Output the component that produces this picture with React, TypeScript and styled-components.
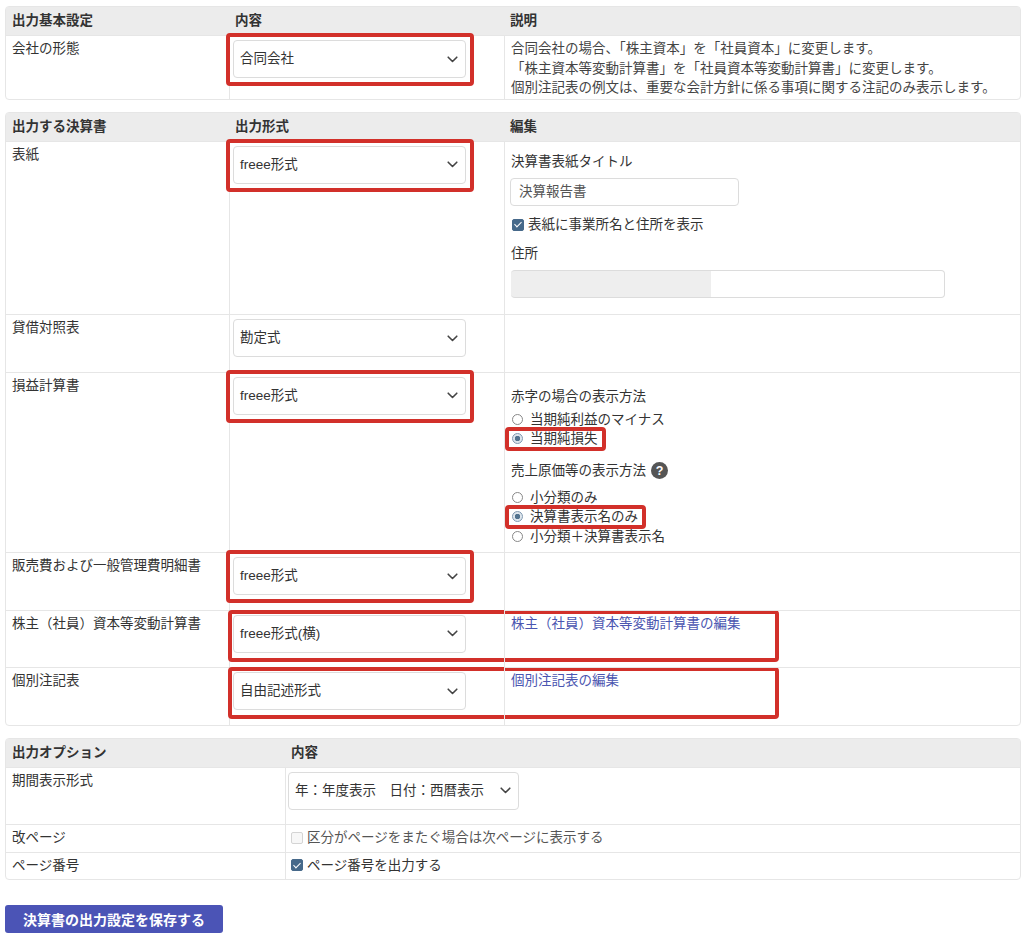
import {createGlobalStyle, styled} from "styled-components";

const GlobalStyle = createGlobalStyle`
    body {
        margin: 0;
        background: #fff;
        font-family: "Liberation Sans", "Noto Sans CJK JP", sans-serif;
        font-size: 13.5px;
        line-height: 19.5px;
        color: #333;
    }
`

const Page = styled.div`
    padding: 6px 5px 10px;
`

const SettingsTable = styled.table`
    width: 1014px;
    table-layout: fixed;
    border-collapse: separate;
    border-spacing: 0;
    border: 1px solid #e6e6e6;
    border-radius: 4px;
    margin-bottom: 12px;
`

const Col = styled.col<{ $w: number }>`
    width: ${p => p.$w}px;
`

const HeadCell = styled.th`
    background: #ececec;
    text-align: left;
    font-weight: bold;
    color: #333;
    padding: 4px 6px 4px;
    height: 20px;
`

const Cell = styled.td<{ $pad?: string }>`
    position: relative;
    vertical-align: top;
    border-top: 1px solid #e6e6e6;
    padding: ${p => p.$pad ?? '3px 6px 4px'};

    & + & {
        border-left: 1px solid #e6e6e6;
    }
`

const Description = styled.div`
    color: #444;
    margin-bottom: -3px;
`

const SelectBox = styled.div<{ $w?: number }>`
    display: flex;
    align-items: center;
    justify-content: space-between;
    box-sizing: border-box;
    width: ${p => p.$w ?? 233}px;
    height: 38px;
    padding: 0 7px 0 6px;
    border: 1px solid #dcdcdc;
    border-radius: 4px;
    background: #fff;
    color: #333;
`

const Marked = styled.div`
    position: relative;
    width: fit-content;
`

const RedFrame = styled.span<{ $inset?: string }>`
    position: absolute;
    inset: ${p => p.$inset ?? '-7px -8px -8px -7px'};
    border: 4px solid #d2302a;
    border-radius: 4px;
    pointer-events: none;
`

const WideFrame = styled.span`
    position: absolute;
    top: -1px;
    left: -2px;
    width: 551px;
    height: 52px;
    box-sizing: border-box;
    border: 4px solid #d2302a;
    border-radius: 4px;
    pointer-events: none;
`

const Stack = styled.div<{ $top: number; $bottom: number }>`
    display: flex;
    flex-direction: column;
    align-items: flex-start;
    padding: ${p => p.$top}px 0 ${p => p.$bottom}px;
`

const Gap = styled.div<{ $h: number }>`
    height: ${p => p.$h}px;
    flex: none;
`

const TextInput = styled.div`
    box-sizing: border-box;
    width: 229px;
    height: 28px;
    margin-left: -1px;
    padding: 0 8px;
    display: flex;
    align-items: center;
    border: 1px solid #dcdcdc;
    border-radius: 4px;
    color: #555;
`

const AddressInput = styled.div`
    box-sizing: border-box;
    width: 434px;
    height: 28px;
    border: 1px solid #dcdcdc;
    border-left: none;
    border-radius: 4px;
    background: linear-gradient(to right, #eeeeee 0 200px, #fff 200px);
`

const CheckLine = styled.label<{ $muted?: boolean }>`
    display: flex;
    align-items: center;
    gap: 4px;
    color: ${p => p.$muted ? '#555' : '#333'};
`

const CheckBox = styled.span<{ $on?: boolean }>`
    position: relative;
    flex: none;
    box-sizing: border-box;
    width: 12px;
    height: 12px;
    margin-left: 1px;
    border-radius: 2px;
    border: 1px solid ${p => p.$on ? '#46698a' : '#d4d4d4'};
    background: ${p => p.$on ? '#46698a' : '#f7f7f7'};

    &::after {
        content: '';
        display: ${p => p.$on ? 'block' : 'none'};
        position: absolute;
        left: 3px;
        top: 0.5px;
        width: 3px;
        height: 6px;
        border: solid #fff;
        border-width: 0 1.6px 1.6px 0;
        transform: rotate(45deg);
    }
`

const RadioLine = styled.label`
    display: flex;
    align-items: center;
    gap: 7px;
    color: #333;
`

const RadioDot = styled.span<{ $on?: boolean }>`
    flex: none;
    box-sizing: border-box;
    width: 11px;
    height: 11px;
    margin-left: 1px;
    border-radius: 50%;
    border: 1px solid ${p => p.$on ? '#7f98b0' : '#888'};
    background: ${p => p.$on ? 'radial-gradient(circle, #52738f 0 2.5px, #dde5ec 3px)' : '#fff'};
`

const Heading = styled.div`
    display: flex;
    align-items: center;
    gap: 5px;
    color: #333;
`

const HelpIcon = styled.span`
    display: inline-flex;
    align-items: center;
    justify-content: center;
    width: 17px;
    height: 17px;
    border-radius: 50%;
    background: #555;
    color: #fff;
    font-size: 12.5px;
    font-weight: bold;
    line-height: 1;
`

const EditLink = styled.a`
    color: #4a55b0;
    text-decoration: none;
`

const SaveButton = styled.button`
    display: block;
    margin-top: 25px;
    width: 218px;
    height: 28px;
    border: none;
    border-radius: 3px;
    background: #4b54b6;
    color: #fff;
    font-family: "Liberation Sans", "Noto Sans CJK JP", sans-serif;
    font-size: 14px;
    font-weight: bold;
    cursor: pointer;
`

function Chevron() {
    return (
        <svg width="11" height="7" viewBox="0 0 11 7">
            <path d="M1.2 1.2 L5.5 5.5 L9.8 1.2" fill="none" stroke="#444" strokeWidth="1.6" strokeLinecap="round" strokeLinejoin="round"/>
        </svg>
    )
}

function Select({value, width, marked}: { value: string; width?: number; marked?: boolean }) {
    const box = (
        <SelectBox $w={width}>
            <span>{value}</span>
            <Chevron/>
        </SelectBox>
    )
    if (!marked) return box
    return (
        <Marked>
            {box}
            <RedFrame/>
        </Marked>
    )
}

function Radio({label, on, marked}: { label: string; on?: boolean; marked?: boolean }) {
    return (
        <Marked>
            <RadioLine>
                <RadioDot $on={on}/>
                {label}
            </RadioLine>
            {marked && <RedFrame $inset={'-2px -8px -2px -6px'}/>}
        </Marked>
    )
}

const SELECT_PAD = '4px 3px 14.5px'

export default function App() {
    return (
        <Page>
            <GlobalStyle/>

            <SettingsTable>
                <colgroup>
                    <Col $w={223}/>
                    <Col $w={275}/>
                    <Col $w={516}/>
                </colgroup>
                <thead>
                <tr>
                    <HeadCell>出力基本設定</HeadCell>
                    <HeadCell>内容</HeadCell>
                    <HeadCell>説明</HeadCell>
                </tr>
                </thead>
                <tbody>
                <tr>
                    <Cell>会社の形態</Cell>
                    <Cell $pad={'4px 3px 0'}><Select value={'合同会社'} marked/></Cell>
                    <Cell>
                        <Description>
                            合同会社の場合、「株主資本」を「社員資本」に変更します。<br/>
                            「株主資本等変動計算書」を「社員資本等変動計算書」に変更します。<br/>
                            個別注記表の例文は、重要な会計方針に係る事項に関する注記のみ表示します。
                        </Description>
                    </Cell>
                </tr>
                </tbody>
            </SettingsTable>

            <SettingsTable>
                <colgroup>
                    <Col $w={223}/>
                    <Col $w={275}/>
                    <Col $w={516}/>
                </colgroup>
                <thead>
                <tr>
                    <HeadCell>出力する決算書</HeadCell>
                    <HeadCell>出力形式</HeadCell>
                    <HeadCell>編集</HeadCell>
                </tr>
                </thead>
                <tbody>
                <tr>
                    <Cell>表紙</Cell>
                    <Cell $pad={SELECT_PAD}><Select value={'freee形式'} marked/></Cell>
                    <Cell $pad={'0 6px'}>
                        <Stack $top={10} $bottom={16}>
                            <div>決算書表紙タイトル</div>
                            <Gap $h={7}/>
                            <TextInput>決算報告書</TextInput>
                            <Gap $h={9}/>
                            <CheckLine><CheckBox $on/>表紙に事業所名と住所を表示</CheckLine>
                            <Gap $h={9.5}/>
                            <div>住所</div>
                            <Gap $h={6.5}/>
                            <AddressInput/>
                        </Stack>
                    </Cell>
                </tr>
                <tr>
                    <Cell>貸借対照表</Cell>
                    <Cell $pad={SELECT_PAD}><Select value={'勘定式'}/></Cell>
                    <Cell/>
                </tr>
                <tr>
                    <Cell>損益計算書</Cell>
                    <Cell $pad={SELECT_PAD}><Select value={'freee形式'} marked/></Cell>
                    <Cell $pad={'0 6px'}>
                        <Stack $top={14} $bottom={6}>
                            <Heading>赤字の場合の表示方法</Heading>
                            <Gap $h={3.5}/>
                            <Radio label={'当期純利益のマイナス'}/>
                            <Radio label={'当期純損失'} on marked/>
                            <Gap $h={12.5}/>
                            <Heading>売上原価等の表示方法<HelpIcon>?</HelpIcon></Heading>
                            <Gap $h={7}/>
                            <Radio label={'小分類のみ'}/>
                            <Radio label={'決算書表示名のみ'} on marked/>
                            <Radio label={'小分類＋決算書表示名'}/>
                        </Stack>
                    </Cell>
                </tr>
                <tr>
                    <Cell>販売費および一般管理費明細書</Cell>
                    <Cell $pad={SELECT_PAD}><Select value={'freee形式'} marked/></Cell>
                    <Cell/>
                </tr>
                <tr>
                    <Cell>株主（社員）資本等変動計算書</Cell>
                    <Cell $pad={SELECT_PAD}>
                        <Select value={'freee形式(横)'}/>
                        <WideFrame/>
                    </Cell>
                    <Cell><EditLink href={'#'}>株主（社員）資本等変動計算書の編集</EditLink></Cell>
                </tr>
                <tr>
                    <Cell>個別注記表</Cell>
                    <Cell $pad={SELECT_PAD}>
                        <Select value={'自由記述形式'}/>
                        <WideFrame/>
                    </Cell>
                    <Cell><EditLink href={'#'}>個別注記表の編集</EditLink></Cell>
                </tr>
                </tbody>
            </SettingsTable>

            <SettingsTable>
                <colgroup>
                    <Col $w={279}/>
                    <Col $w={735}/>
                </colgroup>
                <thead>
                <tr>
                    <HeadCell>出力オプション</HeadCell>
                    <HeadCell>内容</HeadCell>
                </tr>
                </thead>
                <tbody>
                <tr>
                    <Cell>期間表示形式</Cell>
                    <Cell $pad={'4px 2px 14.5px'}><Select value={'年：年度表示　日付：西暦表示'} width={231}/></Cell>
                </tr>
                <tr>
                    <Cell>改ページ</Cell>
                    <Cell $pad={'3px 4px 4px'}>
                        <CheckLine $muted><CheckBox/>区分がページをまたぐ場合は次ページに表示する</CheckLine>
                    </Cell>
                </tr>
                <tr>
                    <Cell>ページ番号</Cell>
                    <Cell $pad={'3px 4px 4px'}>
                        <CheckLine><CheckBox $on/>ページ番号を出力する</CheckLine>
                    </Cell>
                </tr>
                </tbody>
            </SettingsTable>

            <SaveButton>決算書の出力設定を保存する</SaveButton>
        </Page>
    )
}
